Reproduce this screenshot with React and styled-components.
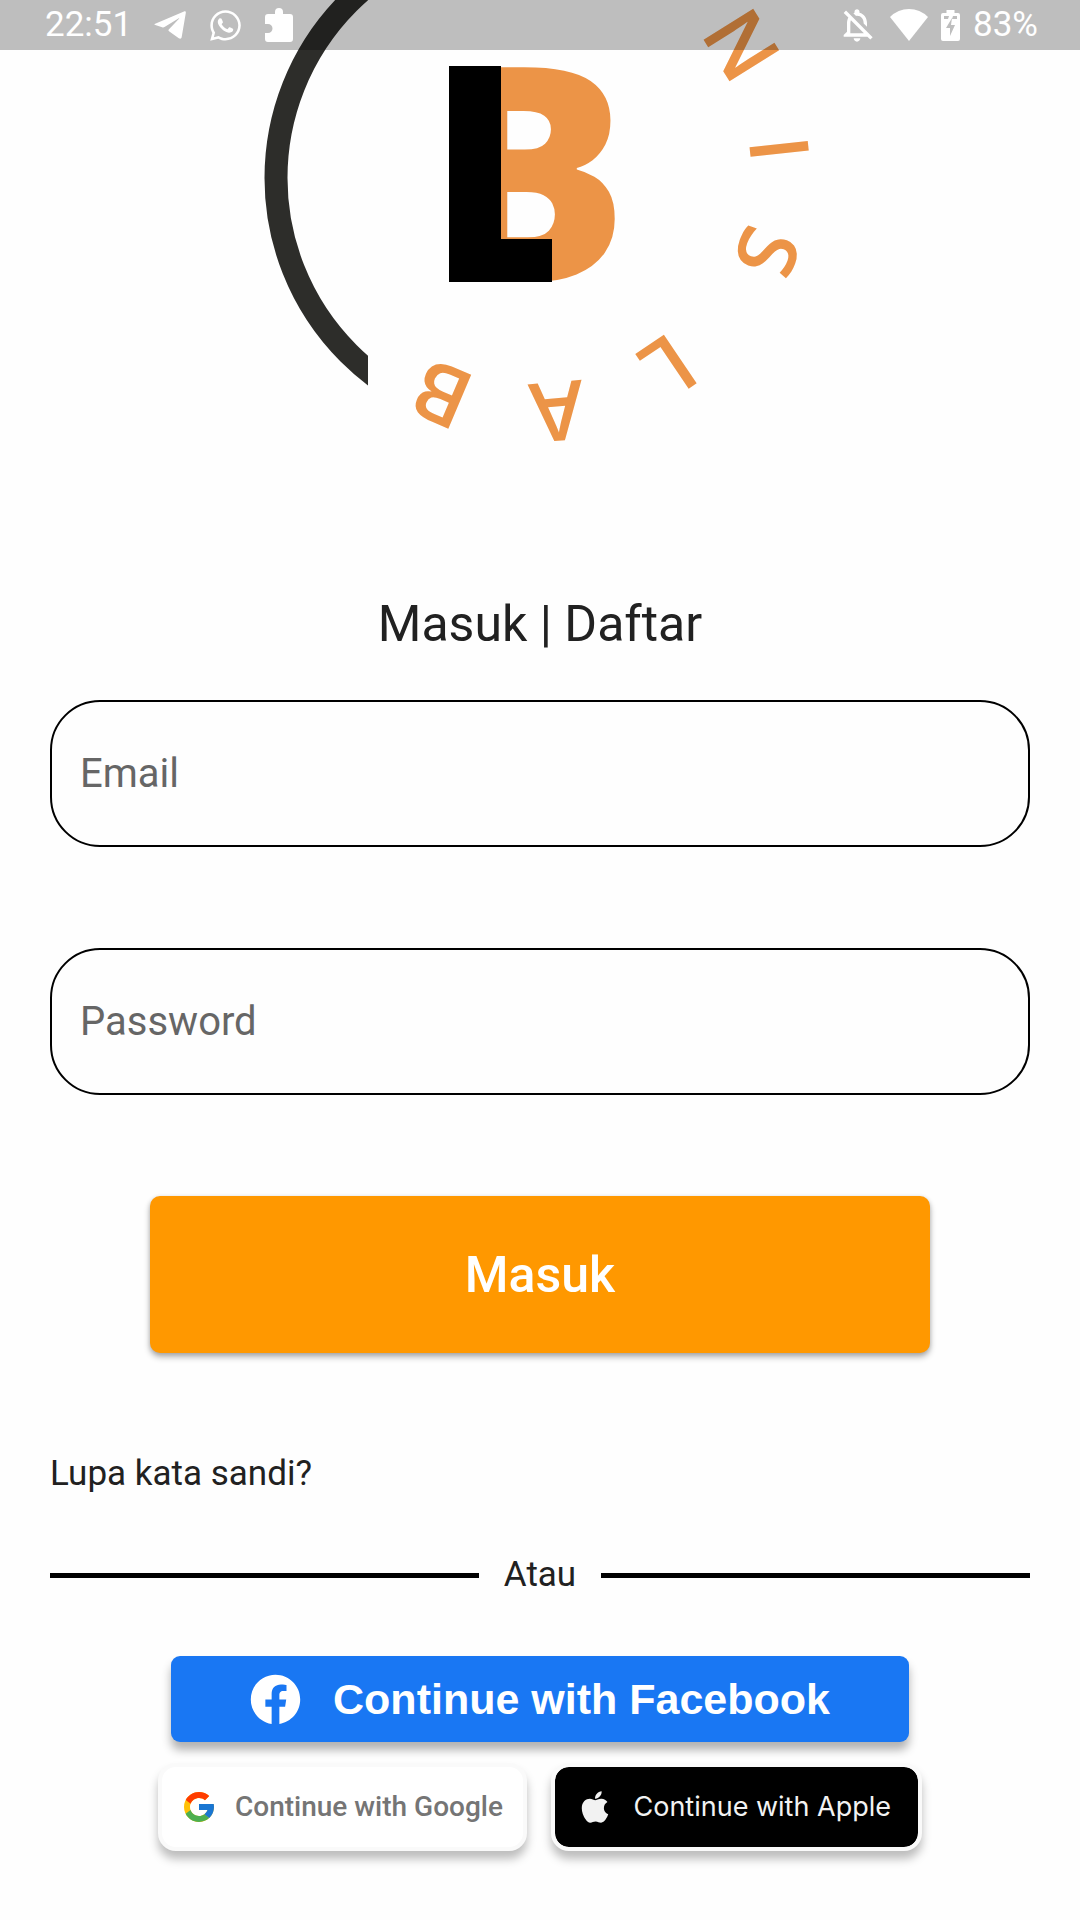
import React from "react";
import styled, { createGlobalStyle } from "styled-components";
import { FaApple, FaFacebook, FaWhatsapp } from "react-icons/fa";
import { FcGoogle } from "react-icons/fc";
import { MdOutlineNotificationsOff } from "react-icons/md";

const GlobalStyle = createGlobalStyle`
  * { box-sizing: border-box; }
  body {
    margin: 0;
    background: #fefefe;
    color: #212121;
    font-family: Roboto, "Liberation Sans", sans-serif;
  }
`;

const StatusBar = styled.header`
  position: absolute;
  top: 0;
  left: 0;
  right: 0;
  height: 50px;
  padding: 0 42px 0 45px;
  display: flex;
  align-items: center;
  justify-content: space-between;
  background: rgba(0, 0, 0, 0.25);
  color: #fff;
  font-size: 35px;
  line-height: 50px;
`;

const StatusGroup = styled.div`
  display: flex;
  align-items: center;
  gap: ${(p) => p.$gap}px;
  svg { display: block; flex: none; }
`;

const Page = styled.main`
  padding: 0 50px 60px;
  display: flex;
  flex-direction: column;
`;

const Logo = styled.svg`
  display: block;
  align-self: center;
  width: 560px;
  max-width: 100%;
`;

const RingLetter = styled.text`
  font-family: "Open Sans", "Noto Sans", sans-serif;
  font-weight: 600;
  font-size: 82px;
  fill: #ec9447;
  text-anchor: middle;
`;

const MonogramLetter = styled.text`
  font-family: "Open Sans", "Noto Sans", sans-serif;
  font-weight: 800;
  font-size: 301px;
  fill: #ec9447;
`;

const Title = styled.h1`
  margin: 144px 0 46px;
  font-size: 50px;
  line-height: 60px;
  font-weight: 400;
  text-align: center;
`;

const Form = styled.form`
  display: flex;
  flex-direction: column;
`;

const Field = styled.input`
  width: 100%;
  height: 147px;
  margin-bottom: 101px;
  padding: 0 28px;
  border: 2px solid #000;
  border-radius: 50px;
  background: transparent;
  color: #212121;
  font: 400 40px/48px Roboto, sans-serif;
  outline: none;
  &::placeholder { color: #666; opacity: 1; }
`;

const SubmitButton = styled.button`
  height: 157px;
  margin: 0 100px;
  border: 0;
  border-radius: 10px;
  background: #ff9800;
  color: #fff;
  font: 500 50px/60px Roboto, sans-serif;
  box-shadow: 0 4px 6px rgba(0, 0, 0, 0.3), 0 1px 4px rgba(0, 0, 0, 0.12);
`;

const ForgotLink = styled.a`
  align-self: flex-start;
  margin: 101px 0 61px;
  color: inherit;
  text-decoration: none;
  font-size: 35px;
  line-height: 40px;
`;

const Divider = styled.div`
  display: flex;
  align-items: center;
  gap: 25px;
  margin-bottom: 61px;
  font-size: 35px;
  line-height: 40px;
  &::before, &::after {
    content: "";
    flex: 1;
    height: 5px;
    background: #000;
  }
`;

const Social = styled.div`
  align-self: center;
  width: 764px;
  max-width: 100%;
  display: flex;
  flex-direction: column;
  gap: 21px;
`;

const SocialRow = styled.div`
  display: flex;
  gap: 24px;
`;

const FacebookButton = styled.button`
  height: 86px;
  margin: 0 13px;
  padding: 0;
  border: 0;
  border-radius: 9px;
  display: flex;
  align-items: center;
  justify-content: center;
  gap: 32px;
  background: #1977f3;
  color: #fff;
  font: 700 43px/50px "Liberation Sans", Arial, sans-serif;
  box-shadow: 0 8px 10px rgba(0, 0, 0, 0.3);
`;

const ProviderButton = styled.button`
  flex: 1;
  height: 88px;
  padding: 0 0 0 ${(p) => p.$inset}px;
  border: 4px solid #fafafa;
  border-radius: 18px;
  display: flex;
  align-items: center;
  gap: ${(p) => p.$gap}px;
  background: ${(p) => p.$background};
  background-clip: padding-box;
  color: ${(p) => p.$color};
  font: ${(p) => p.$font};
  white-space: nowrap;
  box-shadow: 0 8px 10px rgba(0, 0, 0, 0.26);
  svg { flex: none; }
`;

const ringLetters = [
  { letter: "N", x: 741, y: 45, angle: 58 },
  { letter: "I", x: 779, y: 149, angle: 84 },
  { letter: "S", x: 767, y: 252, angle: 110 },
  { letter: "L", x: 668, y: 367, angle: 146 },
  { letter: "A", x: 557, y: 411, angle: 175 },
  { letter: "B", x: 442, y: 394, angle: 203 },
];

function BrandLogo() {
  return (
    <Logo viewBox="260 0 560 450" role="img" aria-label="Bisnis Lab">
      <defs>
        <clipPath id="ring-left">
          <rect x="260" y="0" width="108" height="450" />
        </clipPath>
      </defs>
      <circle cx="524" cy="178" r="248" fill="none" stroke="#2d2d2a" strokeWidth="23" clipPath="url(#ring-left)" />
      <MonogramLetter x="426" y="282">B</MonogramLetter>
      <rect x="449" y="66" width="52" height="216" />
      <rect x="449" y="239" width="103" height="43" />
      {ringLetters.map(({ letter, x, y, angle }) => (
        <RingLetter key={letter} transform={`translate(${x} ${y}) rotate(${angle})`} y="29">
          {letter}
        </RingLetter>
      ))}
    </Logo>
  );
}

function TelegramIcon() {
  return (
    <svg width="32" height="28" viewBox="0 0 32 28" fill="#fff" aria-hidden="true">
      <path d="M1.2 12.7 30 .4c1.300-.5 2 .2 1.800 1.600L27.700 26c-.3 1.700-1.500 2.100-2.900 1.200l-9.800-7c-.8-.6-.7-1.300 0-2L25 7.800c.5-.5 0-.8-.6-.4L10.500 16c-.8.5-1.500.5-2.400.2l-6.800-2.200c-1.400-.4-1.300-.9-.1-1.300z" />
    </svg>
  );
}

function PuzzleIcon() {
  return (
    <svg width="28" height="34" viewBox="0 0 28 34" fill="#fff" aria-hidden="true">
      <path d="M3 6h7V4a4 4 0 0 1 8 0v2h7a3 3 0 0 1 3 3v22a3 3 0 0 1-3 3H3a3 3 0 0 1-3-3v-6h3a4.500 4.500 0 0 0 0-9H0V9a3 3 0 0 1 3-3z" />
    </svg>
  );
}

function WifiIcon() {
  return (
    <svg width="38" height="32" viewBox="0 0 38 32" fill="#fff" aria-hidden="true">
      <path d="M0 8Q8 0 19 0t19 8L19 32z" />
    </svg>
  );
}

function BatteryIcon() {
  return (
    <svg width="19" height="31" viewBox="0 0 19 31" fill="#fff" fillRule="evenodd" aria-hidden="true">
      <path d="M5.500 0h8v3H17a2 2 0 0 1 2 2v24a2 2 0 0 1-2 2H2a2 2 0 0 1-2-2V5a2 2 0 0 1 2-2h3.500zM3 6v3h4l1-3zm9 0-1 3h5V6zm-1 2L5 18h4v8l5-11h-4z" />
    </svg>
  );
}

export default function App() {
  return (
    <>
      <GlobalStyle />
      <Page>
        <BrandLogo />
        <Title>Masuk | Daftar</Title>
        <Form onSubmit={(e) => e.preventDefault()}>
          <Field type="email" placeholder="Email" aria-label="Email" />
          <Field type="password" placeholder="Password" aria-label="Password" />
          <SubmitButton type="submit">Masuk</SubmitButton>
        </Form>
        <ForgotLink href="#lupa">Lupa kata sandi?</ForgotLink>
        <Divider>Atau</Divider>
        <Social>
          <FacebookButton type="button">
            <FaFacebook size={51} aria-hidden="true" />
            Continue with Facebook
          </FacebookButton>
          <SocialRow>
            <ProviderButton
              type="button"
              $inset={19}
              $gap={18}
              $background="#fff"
              $color="#757575"
              $font='500 28px/34px Roboto, sans-serif'
            >
              <FcGoogle size={36} aria-hidden="true" />
              Continue with Google
            </ProviderButton>
            <ProviderButton
              type="button"
              $inset={22}
              $gap={21}
              $background="#000"
              $color="#f2f2f2"
              $font='400 27px/34px Inter, Roboto, sans-serif'
            >
              <FaApple size={36} aria-hidden="true" />
              Continue with Apple
            </ProviderButton>
          </SocialRow>
        </Social>
      </Page>
      <StatusBar>
        <StatusGroup $gap={22}>
          <span>22:51</span>
          <TelegramIcon />
          <FaWhatsapp size={35} aria-hidden="true" />
          <PuzzleIcon />
        </StatusGroup>
        <StatusGroup $gap={13}>
          <MdOutlineNotificationsOff size={40} aria-hidden="true" />
          <WifiIcon />
          <BatteryIcon />
          <span>83%</span>
        </StatusGroup>
      </StatusBar>
    </>
  );
}
